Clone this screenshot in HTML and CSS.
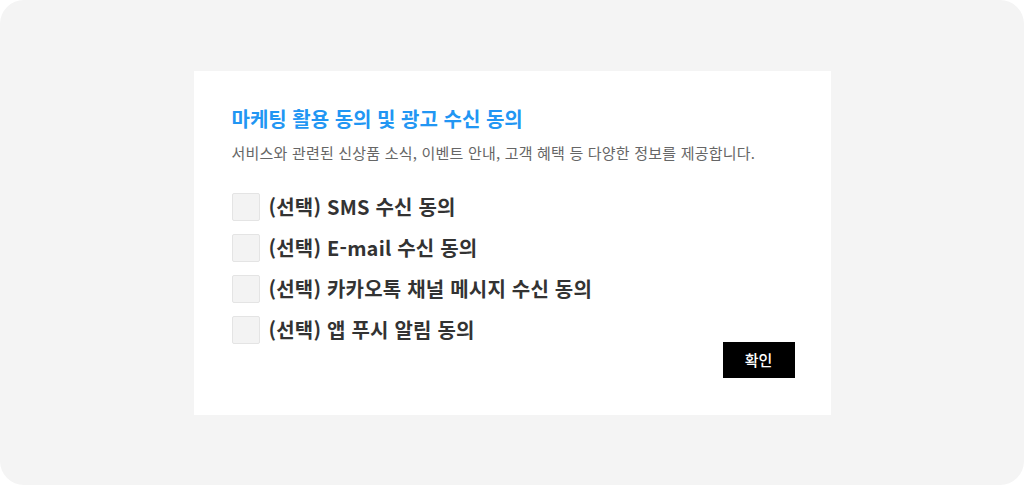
FILE: index.html
```html
<!DOCTYPE html>
<html lang="ko">

<head>
    <meta charset="UTF-8">
    <meta name="viewport" content="width=device-width, initial-scale=1.0">
    <title>마케팅 수신 동의</title>
    <link rel="stylesheet" href="styles.css">
</head>

<body>

    <div class="backdrop">
        <div class="consent-card">
            <h2 class="consent-title">마케팅 활용 동의 및 광고 수신 동의</h2>
            <p class="consent-desc">서비스와 관련된 신상품 소식, 이벤트 안내, 고객 혜택 등 다양한 정보를 제공합니다.</p>

            <ul class="consent-list">
                <li>
                    <label class="consent-item">
                        <input type="checkbox" name="sms">
                        <span class="box"></span>
                        <span class="text">(선택) SMS 수신 동의</span>
                    </label>
                </li>
                <li>
                    <label class="consent-item">
                        <input type="checkbox" name="email">
                        <span class="box"></span>
                        <span class="text">(선택) E-mail 수신 동의</span>
                    </label>
                </li>
                <li>
                    <label class="consent-item">
                        <input type="checkbox" name="kakao">
                        <span class="box"></span>
                        <span class="text">(선택) 카카오톡 채널 메시지 수신 동의</span>
                    </label>
                </li>
                <li>
                    <label class="consent-item">
                        <input type="checkbox" name="push">
                        <span class="box"></span>
                        <span class="text">(선택) 앱 푸시 알림 동의</span>
                    </label>
                </li>
            </ul>

            <div class="actions">
                <button type="button" class="btn-confirm">확인</button>
            </div>
        </div>
    </div>

</body>

</html>
```

FILE: styles.css
```css
* {
    margin: 0;
    padding: 0;
    box-sizing: border-box;
}

body {
    background: #ffffff;
    font-family: "Noto Sans CJK KR", "Noto Sans", sans-serif;
}

.backdrop {
    width: 100vw;
    height: 100vh;
    background: #f4f4f4;
    border-radius: 24px;
    display: flex;
    align-items: center;
    justify-content: center;
}

.consent-card {
    width: 637px;
    height: 344px;
    background: #ffffff;
    padding: 35px 36px 0 38px;
    display: flex;
    flex-direction: column;
}

.consent-title {
    font-size: 20px;
    font-weight: 600;
    line-height: 26px;
    color: #2196f3;
}

.consent-desc {
    margin-top: 11px;
    font-size: 15px;
    line-height: 20px;
    color: #666666;
    letter-spacing: 0.2px;
}

.consent-list {
    list-style: none;
    margin-top: 30px;
    display: flex;
    flex-direction: column;
    gap: 13px;
}

.consent-item {
    display: flex;
    align-items: center;
    gap: 9px;
    cursor: pointer;
}

.consent-item input {
    display: none;
}

.consent-item .box {
    width: 28px;
    height: 28px;
    background: #f3f3f3;
    border: 1px solid #e4e4e4;
    border-radius: 2px;
}

.consent-item input:checked + .box {
    background: #2196f3;
    border-color: #2196f3;
}

.consent-item .text {
    font-size: 20px;
    font-weight: 700;
    line-height: 28px;
    color: #333333;
    letter-spacing: 0.2px;
}

/* 확인 버튼은 마지막 항목에 살짝 겹쳐 오른쪽에 붙는다 */
.actions {
    margin-top: -2px;
    display: flex;
    justify-content: flex-end;
}

.btn-confirm {
    width: 72px;
    height: 36px;
    background: #000000;
    color: #ffffff;
    border: none;
    font-family: inherit;
    font-size: 15px;
    font-weight: 500;
    cursor: pointer;
}
```
